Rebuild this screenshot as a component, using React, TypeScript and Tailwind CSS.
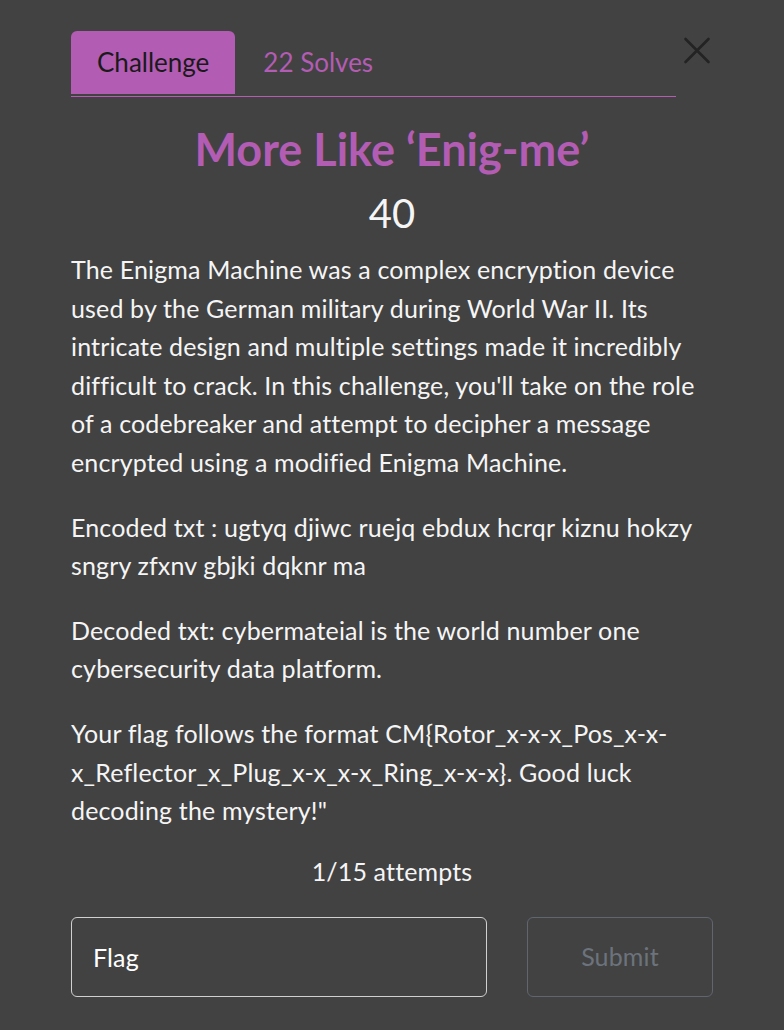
import React from 'react';

export default function App() {
    return (
        <div className="min-h-screen w-full bg-[#424242] px-[71px] pt-[31px] pb-[33px] text-[#f5f5f5] font-['Lato',sans-serif]">
            <div className="flex items-start">
                <div className="flex flex-1 border-b border-[#b55db6]">
                    <button className="mb-[2px] h-[63px] rounded-t-[6px] bg-[#b35cb4] px-[26px] text-[26px] text-[#1a1a1a]">
                        Challenge
                    </button>
                    <button className="mb-[2px] h-[63px] px-[28px] text-[26px] text-[#b35cb4]">
                        22 Solves
                    </button>
                </div>
                <button className="ml-[5px] flex h-[38px] w-[32px] items-center justify-center">
                    <svg width="28" height="28" viewBox="0 0 28 28" fill="none">
                        <path d="M2.5 3 L25.5 26 M25.5 3 L2.5 26" stroke="#232323" strokeWidth="2.6" strokeLinecap="round" />
                    </svg>
                </button>
            </div>

            <h1 className="mt-[27px] text-center text-[45px] font-bold leading-[50px] text-[#b35cb4]">
                More Like ‘Enig-me’
            </h1>
            <div className="mt-[16px] text-center text-[40px] leading-[46px]">40</div>

            <div className="mt-[14px] text-[25px] leading-[38.6px] tracking-[0.15px]">
                <p className="mb-[26px]">
                    The Enigma Machine was a complex encryption device used by the German military during World War II. Its intricate design and multiple settings made it incredibly difficult to crack. In this challenge, you'll take on the role of a codebreaker and attempt to decipher a message encrypted using a modified Enigma Machine.
                </p>
                <p className="mb-[26px]">
                    Encoded txt : ugtyq djiwc ruejq ebdux hcrqr kiznu hokzy sngry zfxnv gbjki dqknr ma
                </p>
                <p className="mb-[26px]">
                    Decoded txt: cybermateial is the world number one cybersecurity data platform.
                </p>
                <p>
                    Your flag follows the format CM{'{'}Rotor_x-x-x_Pos_x-x-x_Reflector_x_Plug_x-x_x-x_Ring_x-x-x{'}'}. Good luck decoding the mystery!"
                </p>
            </div>

            <div className="mt-[22px] text-center text-[25px] leading-[38px] tracking-[0.15px]">1/15 attempts</div>

            <div className="mt-[27px] flex gap-[40px]">
                <input
                    type="text"
                    placeholder="Flag"
                    className="h-[80px] w-[416px] rounded-[6px] border border-[#d0d0d0] bg-transparent px-[21px] text-[25px] tracking-[0.15px] text-white placeholder:text-white focus:outline-none"
                />
                <button className="h-[80px] flex-1 rounded-[6px] border border-[#5f6670] text-[25px] tracking-[0.15px] text-[#6c737c]">
                    Submit
                </button>
            </div>
        </div>
    );
}
